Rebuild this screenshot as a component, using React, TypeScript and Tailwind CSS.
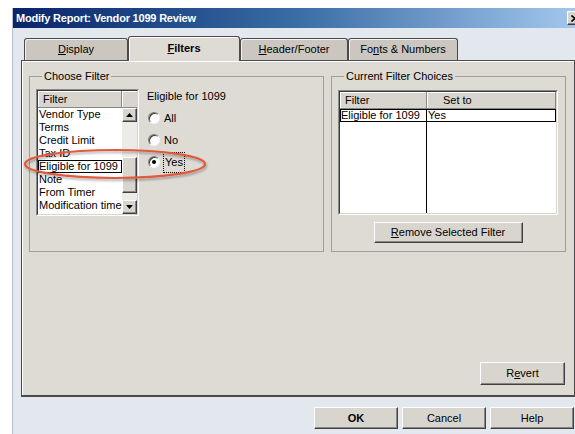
import React from "react";

const raised =
  "bg-[#d8d5ce] border border-t-white border-l-white border-r-[#404040] border-b-[#404040] shadow-[inset_-1px_-1px_0_#8a8782]";

function Button({
  children,
  className = "",
}: {
  children: React.ReactNode;
  className?: string;
}) {
  return (
    <div className={`${raised} flex items-center justify-center text-[11px] text-black ${className}`}>
      {children}
    </div>
  );
}

function Arrow({ up }: { up?: boolean }) {
  return (
    <div className={`${raised} h-[14px] flex items-center justify-center`}>
      <svg width="7" height="4" viewBox="0 0 7 4">
        {up ? <polygon points="0,4 7,4 3.5,0" fill="#000" /> : <polygon points="0,0 7,0 3.5,4" fill="#000" />}
      </svg>
    </div>
  );
}

function Radio({ label, checked, focused }: { label: string; checked?: boolean; focused?: boolean }) {
  return (
    <div className="flex items-center h-[20px]">
      <span className="w-[12px] h-[12px] rounded-full bg-white border border-t-[#7a7a7a] border-l-[#7a7a7a] border-r-[#f4f4f4] border-b-[#f4f4f4] flex items-center justify-center shadow-[inset_1px_1px_0_#3a3a3a]">
        {checked && <span className="w-[4px] h-[4px] rounded-full bg-black" />}
      </span>
      <span
        className={
          focused
            ? "ml-[3px] px-[1px] py-[3px] leading-[13px] border border-dotted border-black"
            : "ml-[4px] leading-[13px]"
        }
      >
        {label}
      </span>
    </div>
  );
}

function Tab({
  label,
  active,
  width,
}: {
  label: React.ReactNode;
  active?: boolean;
  width: string;
}) {
  return active ? (
    <div
      className={`${width} relative z-10 -mb-px h-[25px] rounded-t-[3px] bg-[#dedad4] border border-b-0 border-[#4a4a4a] shadow-[inset_1px_1px_0_#ffffff] flex items-center justify-center pb-[1px] font-bold text-[11px]`}
    >
      {label}
    </div>
  ) : (
    <div
      className={`${width} h-[22px] rounded-t-[3px] bg-[#cbc7c0] border border-b-0 border-[#4a4a4a] shadow-[inset_1px_1px_0_#f2f2f2] flex items-center justify-center text-[11px]`}
    >
      {label}
    </div>
  );
}

const filters = [
  "Vendor Type",
  "Terms",
  "Credit Limit",
  "Tax ID",
  "Eligible for 1099",
  "Note",
  "From Timer",
  "Modification time",
];

export default function App() {
  return (
    <div className="relative w-[575px] h-[434px] overflow-hidden bg-white pt-[8px] pl-[12px] font-['Liberation_Sans',Arial,sans-serif] text-black">
      <div className="w-[573px] h-[426px] flex flex-col bg-[#e3e8ee] border-l border-[#b9bec6]">
        {/* Title bar */}
        <div className="h-[20px] shrink-0 flex items-center justify-between pl-[3px] bg-linear-to-r from-[#0a246a] via-[#3a6ea5] to-[#a6caf0]">
          <span className="text-white font-bold text-[11px] leading-[13px] tracking-[-0.2px]">
            Modify Report: Vendor 1099 Review
          </span>
          <div className={`${raised} w-[16px] h-[14px] mr-[2px] flex items-center justify-center`}>
            <svg width="8" height="7" viewBox="0 0 8 7">
              <path d="M0.5 0.5 L7.5 6.5 M7.5 0.5 L0.5 6.5" stroke="#000" strokeWidth="1.6" />
            </svg>
          </div>
        </div>

        {/* Tabs */}
        <div className="ml-[8px] mt-[8px] pl-[3px] flex items-end h-[24px]">
          <Tab
            width="w-[104px]"
            label={
              <span>
                <u>D</u>isplay
              </span>
            }
          />
          <Tab
            active
            width="w-[112px]"
            label={
              <span>
                <u>F</u>ilters
              </span>
            }
          />
          <Tab
            width="w-[108px]"
            label={
              <span>
                <u>H</u>eader/Footer
              </span>
            }
          />
          <Tab
            width="w-[110px]"
            label={
              <span>
                Fo<u>n</u>ts &amp; Numbers
              </span>
            }
          />
        </div>

        {/* Tab page */}
        <div className="ml-[8px] w-[554px] h-[337px] flex flex-col bg-[#dedad4] border border-[#4a4a4a] border-b-2 shadow-[inset_1px_1px_0_#ffffff] text-[11px]">
          <div className="flex mt-[9px] ml-[7px] gap-[7px]">
            {/* Choose Filter */}
            <fieldset className="w-[295px] h-[182px] border border-[#a19e98] px-[6px] pt-[6px]">
              <legend className="ml-[6px] px-[2px] leading-[13px]">Choose Filter</legend>
              <div className="flex">
                {/* Filter list */}
                <div className="w-[103px] h-[127px] border border-t-[#8a8a8a] border-l-[#8a8a8a] border-r-white border-b-white">
                  <div className="h-full flex flex-col border border-t-[#3a3a3a] border-l-[#3a3a3a] border-r-[#d8d5ce] border-b-[#d8d5ce] bg-white">
                    <div className="flex h-[17px] shrink-0">
                      <div className="w-[84px] bg-[#d8d5ce] border-r border-b border-[#8a8782] shadow-[inset_1px_1px_0_#ffffff] pl-[5px] leading-[16px]">
                        Filter
                      </div>
                      <div className="flex-1 bg-[#d8d5ce] border-b border-[#8a8782] shadow-[inset_1px_1px_0_#ffffff]" />
                    </div>
                    <div className="flex flex-1">
                      <div className="w-[84px] flex flex-col">
                        {filters.map((f) =>
                          f === "Eligible for 1099" ? (
                            <div key={f} className="h-[13px] leading-[11px] border border-black whitespace-nowrap">
                              {f}
                            </div>
                          ) : (
                            <div key={f} className="h-[13px] leading-[13px] pl-[1px] whitespace-nowrap">
                              {f}
                            </div>
                          )
                        )}
                      </div>
                      <div className="flex-1 flex flex-col bg-[#ecebe7]">
                        <Arrow up />
                        <div className="h-[35px]" />
                        <div className={`${raised} h-[36px]`} />
                        <div className="h-[7px]" />
                        <Arrow />
                      </div>
                    </div>
                  </div>
                </div>

                {/* Eligible for 1099 choices */}
                <div className="ml-[8px] flex flex-col pt-[1px]">
                  <div className="leading-[13px]">Eligible for 1099</div>
                  <div className="mt-[5px] flex flex-col gap-[2px] pl-[1px]">
                    <Radio label="All" />
                    <Radio label="No" />
                    <Radio label="Yes" checked focused />
                  </div>
                </div>
              </div>
            </fieldset>

            {/* Current Filter Choices */}
            <fieldset className="w-[234px] h-[182px] border border-[#a19e98] pl-[6px] pr-[7px] pt-[7px]">
              <legend className="ml-[6px] px-[2px] leading-[13px]">Current Filter Choices</legend>
              <div className="w-[220px] h-[125px] border border-t-[#8a8a8a] border-l-[#8a8a8a] border-r-white border-b-white">
                <div className="h-full flex flex-col border border-t-[#3a3a3a] border-l-[#3a3a3a] border-r-[#d8d5ce] border-b-[#d8d5ce] bg-white">
                  <div className="flex h-[17px] shrink-0">
                    <div className="w-[87px] bg-[#d8d5ce] border-r border-b border-[#8a8782] shadow-[inset_1px_1px_0_#ffffff] pl-[5px] leading-[16px]">
                      Filter
                    </div>
                    <div className="flex-1 bg-[#d8d5ce] border-r border-b border-[#8a8782] shadow-[inset_1px_1px_0_#ffffff] pl-[16px] leading-[16px]">
                      Set to
                    </div>
                  </div>
                  <div className="flex h-[13px] border border-black">
                    <div className="w-[86px] border-r border-black leading-[11px] whitespace-nowrap">Eligible for 1099</div>
                    <div className="flex-1 pl-[1px] leading-[11px]">Yes</div>
                  </div>
                  <div className="flex flex-1">
                    <div className="w-[87px] border-r border-black" />
                    <div className="flex-1" />
                  </div>
                </div>
              </div>
              <div className="flex justify-center mt-[7px]">
                <Button className="w-[149px] h-[21px]">
                  <span>
                    <u>R</u>emove Selected Filter
                  </span>
                </Button>
              </div>
            </fieldset>
          </div>

          <div className="flex-1" />
          <div className="flex justify-end pr-[9px] pb-[10px]">
            <Button className="w-[85px] h-[23px]">
              <span>
                R<u>e</u>vert
              </span>
            </Button>
          </div>
        </div>

        {/* Dialog buttons */}
        <div className="ml-[8px] w-[554px] mt-[10px] flex justify-end gap-[4px] pr-[1px]">
          <Button className="w-[84px] h-[22px] font-bold">OK</Button>
          <Button className="w-[84px] h-[22px]">Cancel</Button>
          <Button className="w-[84px] h-[22px]">Help</Button>
        </div>
      </div>

      {/* Red highlight ring drawn over the list */}
      <svg className="absolute left-0 top-0 pointer-events-none" width="575" height="434">
        <defs>
          <filter id="ringShadow" x="-10%" y="-50%" width="120%" height="200%">
            <feDropShadow dx="1" dy="2" stdDeviation="1.2" floodColor="#000" floodOpacity="0.3" />
          </filter>
        </defs>
        <ellipse cx="115" cy="164" rx="90" ry="14" fill="none" stroke="#e05a3c" strokeWidth="2.2" filter="url(#ringShadow)" />
      </svg>
    </div>
  );
}
